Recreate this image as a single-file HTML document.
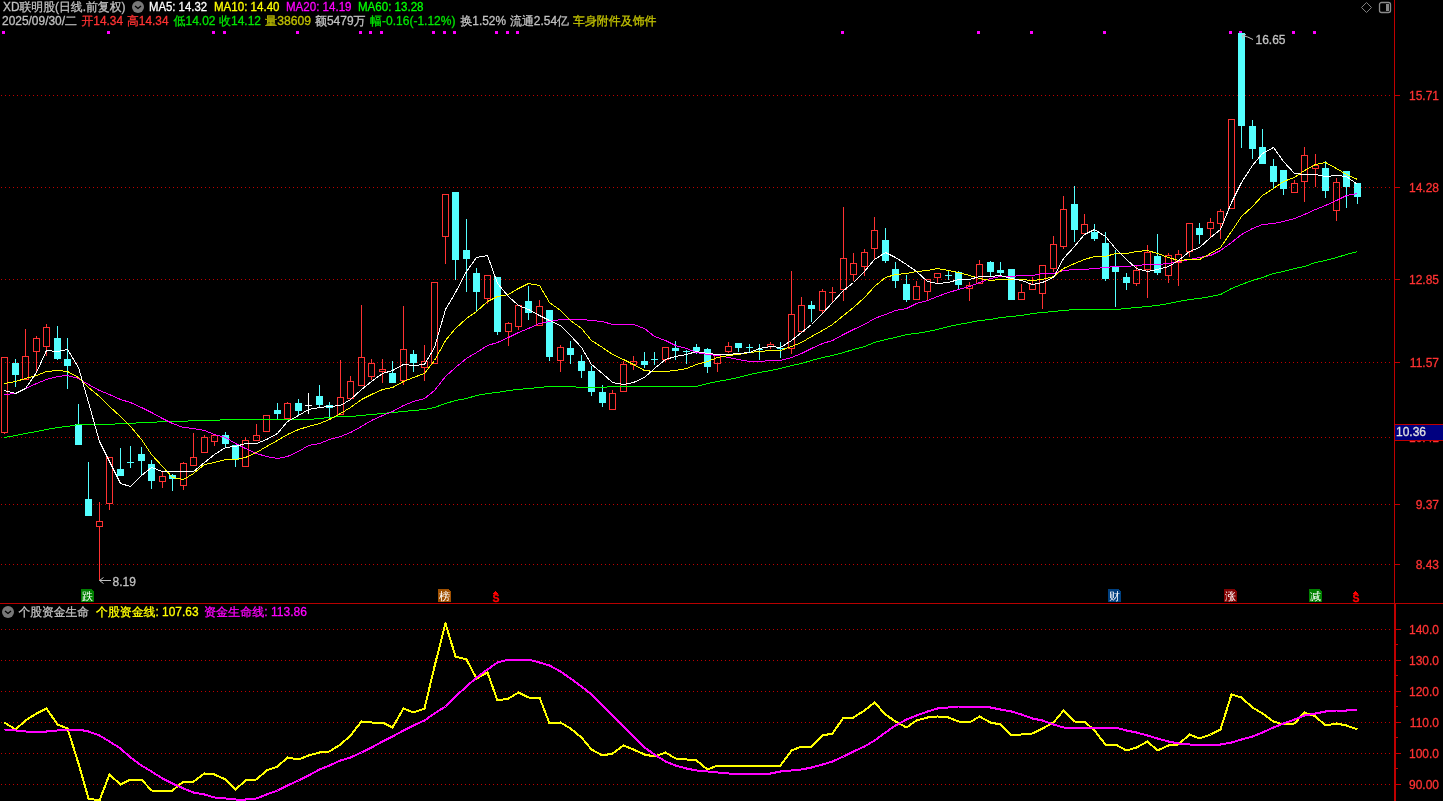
<!DOCTYPE html><html><head><meta charset="utf-8"><title>XD联明股 日线</title>
<style>html,body{margin:0;padding:0;background:#000;overflow:hidden}svg{display:block;will-change:transform}text{font-family:"Liberation Sans","WenQuanYi Zen Hei","Noto Sans CJK SC",sans-serif;font-size:12px;paint-order:stroke}text.t{font-size:11px}</style></head><body>
<svg width="1443" height="801" viewBox="0 0 1443 801" shape-rendering="crispEdges">
<rect width="1443" height="801" fill="#000"/>
<line x1="1" x2="1393" y1="95.5" y2="95.5" stroke="#c00000" stroke-width="1" stroke-dasharray="1 3"/>
<line x1="1" x2="1393" y1="187.5" y2="187.5" stroke="#c00000" stroke-width="1" stroke-dasharray="1 3"/>
<line x1="1" x2="1393" y1="279.5" y2="279.5" stroke="#c00000" stroke-width="1" stroke-dasharray="1 3"/>
<line x1="1" x2="1393" y1="362.5" y2="362.5" stroke="#c00000" stroke-width="1" stroke-dasharray="1 3"/>
<line x1="1" x2="1393" y1="437.5" y2="437.5" stroke="#c00000" stroke-width="1" stroke-dasharray="1 3"/>
<line x1="1" x2="1393" y1="504.5" y2="504.5" stroke="#c00000" stroke-width="1" stroke-dasharray="1 3"/>
<line x1="1" x2="1393" y1="564.5" y2="564.5" stroke="#c00000" stroke-width="1" stroke-dasharray="1 3"/>
<line x1="1" x2="1393" y1="629.5" y2="629.5" stroke="#c00000" stroke-width="1" stroke-dasharray="1 3"/>
<line x1="1" x2="1393" y1="660.5" y2="660.5" stroke="#c00000" stroke-width="1" stroke-dasharray="1 3"/>
<line x1="1" x2="1393" y1="691.5" y2="691.5" stroke="#c00000" stroke-width="1" stroke-dasharray="1 3"/>
<line x1="1" x2="1393" y1="722.5" y2="722.5" stroke="#c00000" stroke-width="1" stroke-dasharray="1 3"/>
<line x1="1" x2="1393" y1="753.5" y2="753.5" stroke="#c00000" stroke-width="1" stroke-dasharray="1 3"/>
<line x1="1" x2="1393" y1="784.5" y2="784.5" stroke="#c00000" stroke-width="1" stroke-dasharray="1 3"/>
<g fill="#ff00ff">
<rect x="2" y="31" width="3" height="3"/>
<rect x="107" y="31" width="3" height="3"/>
<rect x="212" y="31" width="3" height="3"/>
<rect x="223" y="31" width="3" height="3"/>
<rect x="296" y="31" width="3" height="3"/>
<rect x="359" y="31" width="3" height="3"/>
<rect x="369" y="31" width="3" height="3"/>
<rect x="380" y="31" width="3" height="3"/>
<rect x="432" y="31" width="3" height="3"/>
<rect x="443" y="31" width="3" height="3"/>
<rect x="453" y="31" width="3" height="3"/>
<rect x="495" y="31" width="3" height="3"/>
<rect x="506" y="31" width="3" height="3"/>
<rect x="516" y="31" width="3" height="3"/>
<rect x="841" y="31" width="3" height="3"/>
<rect x="977" y="31" width="3" height="3"/>
<rect x="1030" y="31" width="3" height="3"/>
<rect x="1103" y="31" width="3" height="3"/>
<rect x="1229" y="31" width="3" height="3"/>
<rect x="1239" y="31" width="3" height="3"/>
<rect x="1292" y="31" width="3" height="3"/>
<rect x="1313" y="31" width="3" height="3"/>
</g>
<g stroke="#ff3232" fill="none" stroke-width="1">
<rect x="1.5" y="357.5" width="6" height="75"/>
<line x1="4.5" x2="4.5" y1="433" y2="434"/>
</g>
<rect x="12" y="363" width="7" height="12" fill="#54ffff"/>
<line x1="15.5" x2="15.5" y1="359" y2="387" stroke="#54ffff"/>
<g stroke="#ff3232" fill="none" stroke-width="1">
<rect x="22.5" y="356.5" width="6" height="23"/>
<line x1="25.5" x2="25.5" y1="329" y2="356"/>
</g>
<g stroke="#ff3232" fill="none" stroke-width="1">
<rect x="33.5" y="338.5" width="6" height="13"/>
<line x1="36.5" x2="36.5" y1="336" y2="338"/>
<line x1="36.5" x2="36.5" y1="352" y2="372"/>
</g>
<g stroke="#ff3232" fill="none" stroke-width="1">
<rect x="43.5" y="327.5" width="6" height="19"/>
<line x1="46.5" x2="46.5" y1="324" y2="327"/>
<line x1="46.5" x2="46.5" y1="347" y2="356"/>
</g>
<rect x="54" y="338" width="7" height="21" fill="#54ffff"/>
<line x1="57.5" x2="57.5" y1="326" y2="360" stroke="#54ffff"/>
<rect x="64" y="359" width="7" height="7" fill="#54ffff"/>
<line x1="67.5" x2="67.5" y1="338" y2="389" stroke="#54ffff"/>
<rect x="75" y="424" width="7" height="21" fill="#54ffff"/>
<line x1="78.5" x2="78.5" y1="404" y2="445" stroke="#54ffff"/>
<rect x="85" y="499" width="7" height="17" fill="#54ffff"/>
<line x1="88.5" x2="88.5" y1="462" y2="516" stroke="#54ffff"/>
<g stroke="#ff3232" fill="none" stroke-width="1">
<rect x="96.5" y="521.5" width="6" height="5"/>
<line x1="99.5" x2="99.5" y1="502" y2="521"/>
<line x1="99.5" x2="99.5" y1="527" y2="580"/>
</g>
<g stroke="#ff3232" fill="none" stroke-width="1">
<rect x="106.5" y="457.5" width="6" height="46"/>
<line x1="109.5" x2="109.5" y1="504" y2="510"/>
</g>
<rect x="117" y="469" width="7" height="7" fill="#54ffff"/>
<line x1="120.5" x2="120.5" y1="448" y2="476" stroke="#54ffff"/>
<g stroke="#54ffff"><line x1="127" x2="134" y1="462.5" y2="462.5"/><line x1="130.5" x2="130.5" y1="446" y2="468"/></g>
<rect x="138" y="454" width="7" height="7" fill="#54ffff"/>
<line x1="141.5" x2="141.5" y1="447" y2="475" stroke="#54ffff"/>
<rect x="148" y="464" width="7" height="17" fill="#54ffff"/>
<line x1="151.5" x2="151.5" y1="460" y2="489" stroke="#54ffff"/>
<g stroke="#ff3232" fill="none" stroke-width="1">
<rect x="159.5" y="476.5" width="6" height="5"/>
<line x1="162.5" x2="162.5" y1="472" y2="476"/>
<line x1="162.5" x2="162.5" y1="482" y2="488"/>
</g>
<rect x="169" y="475" width="7" height="4" fill="#54ffff"/>
<line x1="172.5" x2="172.5" y1="474" y2="491" stroke="#54ffff"/>
<g stroke="#ff3232" fill="none" stroke-width="1">
<rect x="180.5" y="463.5" width="6" height="22"/>
<line x1="183.5" x2="183.5" y1="462" y2="463"/>
<line x1="183.5" x2="183.5" y1="486" y2="490"/>
</g>
<g stroke="#ff3232" fill="none" stroke-width="1">
<rect x="190.5" y="457.5" width="6" height="8"/>
<line x1="193.5" x2="193.5" y1="433" y2="457"/>
</g>
<g stroke="#ff3232" fill="none" stroke-width="1">
<rect x="201.5" y="437.5" width="6" height="15"/>
<line x1="204.5" x2="204.5" y1="435" y2="437"/>
</g>
<g stroke="#ff3232" fill="none" stroke-width="1">
<rect x="211.5" y="435.5" width="6" height="6"/>
<line x1="214.5" x2="214.5" y1="434" y2="435"/>
<line x1="214.5" x2="214.5" y1="442" y2="446"/>
</g>
<rect x="222" y="435" width="7" height="9" fill="#54ffff"/>
<line x1="225.5" x2="225.5" y1="432" y2="447" stroke="#54ffff"/>
<rect x="232" y="445" width="7" height="15" fill="#54ffff"/>
<line x1="235.5" x2="235.5" y1="445" y2="467" stroke="#54ffff"/>
<g stroke="#ff3232" fill="none" stroke-width="1">
<rect x="242.5" y="440.5" width="6" height="26"/>
<line x1="245.5" x2="245.5" y1="437" y2="440"/>
</g>
<g stroke="#ff3232" fill="none" stroke-width="1">
<rect x="253.5" y="435.5" width="6" height="5"/>
<line x1="256.5" x2="256.5" y1="424" y2="435"/>
</g>
<g stroke="#ff3232" fill="none" stroke-width="1">
<rect x="263.5" y="415.5" width="6" height="16"/>
</g>
<rect x="274" y="410" width="7" height="4" fill="#54ffff"/>
<line x1="277.5" x2="277.5" y1="403" y2="419" stroke="#54ffff"/>
<g stroke="#ff3232" fill="none" stroke-width="1">
<rect x="284.5" y="403.5" width="6" height="15"/>
<line x1="287.5" x2="287.5" y1="402" y2="403"/>
</g>
<rect x="295" y="403" width="7" height="8" fill="#54ffff"/>
<line x1="298.5" x2="298.5" y1="399" y2="415" stroke="#54ffff"/>
<g stroke="#ffffff"><line x1="305" x2="312" y1="405.5" y2="405.5"/><line x1="308.5" x2="308.5" y1="393" y2="414"/></g>
<rect x="316" y="396" width="7" height="9" fill="#54ffff"/>
<line x1="319.5" x2="319.5" y1="385" y2="407" stroke="#54ffff"/>
<rect x="326" y="405" width="7" height="3" fill="#54ffff"/>
<line x1="329.5" x2="329.5" y1="402" y2="419" stroke="#54ffff"/>
<g stroke="#ff3232" fill="none" stroke-width="1">
<rect x="337.5" y="397.5" width="6" height="17"/>
<line x1="340.5" x2="340.5" y1="360" y2="397"/>
</g>
<g stroke="#ff3232" fill="none" stroke-width="1">
<rect x="347.5" y="381.5" width="6" height="17"/>
<line x1="350.5" x2="350.5" y1="376" y2="381"/>
</g>
<g stroke="#ff3232" fill="none" stroke-width="1">
<rect x="358.5" y="357.5" width="6" height="28"/>
<line x1="361.5" x2="361.5" y1="305" y2="357"/>
</g>
<g stroke="#ff3232" fill="none" stroke-width="1">
<rect x="368.5" y="363.5" width="6" height="13"/>
<line x1="371.5" x2="371.5" y1="359" y2="363"/>
<line x1="371.5" x2="371.5" y1="377" y2="380"/>
</g>
<g stroke="#ff3232" fill="none" stroke-width="1">
<rect x="379.5" y="369.5" width="6" height="2"/>
<line x1="382.5" x2="382.5" y1="359" y2="369"/>
<line x1="382.5" x2="382.5" y1="372" y2="383"/>
</g>
<rect x="389" y="373" width="7" height="10" fill="#54ffff"/>
<line x1="392.5" x2="392.5" y1="361" y2="383" stroke="#54ffff"/>
<g stroke="#ff3232" fill="none" stroke-width="1">
<rect x="400.5" y="349.5" width="6" height="31"/>
<line x1="403.5" x2="403.5" y1="306" y2="349"/>
<line x1="403.5" x2="403.5" y1="381" y2="385"/>
</g>
<rect x="410" y="354" width="7" height="9" fill="#54ffff"/>
<line x1="413.5" x2="413.5" y1="350" y2="372" stroke="#54ffff"/>
<g stroke="#ff3232" fill="none" stroke-width="1">
<rect x="421.5" y="361.5" width="6" height="6"/>
<line x1="424.5" x2="424.5" y1="345" y2="361"/>
<line x1="424.5" x2="424.5" y1="368" y2="381"/>
</g>
<g stroke="#ff3232" fill="none" stroke-width="1">
<rect x="431.5" y="282.5" width="6" height="81"/>
</g>
<g stroke="#ff3232" fill="none" stroke-width="1">
<rect x="442.5" y="194.5" width="6" height="42"/>
<line x1="445.5" x2="445.5" y1="237" y2="264"/>
</g>
<rect x="452" y="192" width="7" height="68" fill="#54ffff"/>
<line x1="455.5" x2="455.5" y1="192" y2="280" stroke="#54ffff"/>
<rect x="463" y="250" width="7" height="9" fill="#54ffff"/>
<line x1="466.5" x2="466.5" y1="219" y2="292" stroke="#54ffff"/>
<rect x="473" y="273" width="7" height="19" fill="#54ffff"/>
<line x1="476.5" x2="476.5" y1="268" y2="311" stroke="#54ffff"/>
<g stroke="#ff3232" fill="none" stroke-width="1">
<rect x="484.5" y="275.5" width="6" height="23"/>
<line x1="487.5" x2="487.5" y1="299" y2="304"/>
</g>
<rect x="494" y="277" width="7" height="55" fill="#54ffff"/>
<line x1="497.5" x2="497.5" y1="277" y2="335" stroke="#54ffff"/>
<g stroke="#ff3232" fill="none" stroke-width="1">
<rect x="505.5" y="323.5" width="6" height="8"/>
<line x1="508.5" x2="508.5" y1="322" y2="323"/>
<line x1="508.5" x2="508.5" y1="332" y2="346"/>
</g>
<g stroke="#ff3232" fill="none" stroke-width="1">
<rect x="515.5" y="305.5" width="6" height="21"/>
<line x1="518.5" x2="518.5" y1="327" y2="330"/>
</g>
<rect x="525" y="301" width="7" height="12" fill="#54ffff"/>
<line x1="528.5" x2="528.5" y1="286" y2="320" stroke="#54ffff"/>
<g stroke="#ff3232" fill="none" stroke-width="1">
<rect x="536.5" y="306.5" width="6" height="19"/>
<line x1="539.5" x2="539.5" y1="300" y2="306"/>
</g>
<rect x="546" y="310" width="7" height="47" fill="#54ffff"/>
<line x1="549.5" x2="549.5" y1="310" y2="361" stroke="#54ffff"/>
<g stroke="#ff3232" fill="none" stroke-width="1">
<rect x="557.5" y="347.5" width="6" height="13"/>
<line x1="560.5" x2="560.5" y1="345" y2="347"/>
<line x1="560.5" x2="560.5" y1="361" y2="372"/>
</g>
<rect x="567" y="348" width="7" height="7" fill="#54ffff"/>
<line x1="570.5" x2="570.5" y1="341" y2="364" stroke="#54ffff"/>
<rect x="578" y="361" width="7" height="10" fill="#54ffff"/>
<line x1="581.5" x2="581.5" y1="355" y2="378" stroke="#54ffff"/>
<rect x="588" y="371" width="7" height="21" fill="#54ffff"/>
<line x1="591.5" x2="591.5" y1="366" y2="396" stroke="#54ffff"/>
<rect x="599" y="392" width="7" height="11" fill="#54ffff"/>
<line x1="602.5" x2="602.5" y1="385" y2="407" stroke="#54ffff"/>
<g stroke="#ff3232" fill="none" stroke-width="1">
<rect x="609.5" y="393.5" width="6" height="16"/>
<line x1="612.5" x2="612.5" y1="390" y2="393"/>
</g>
<g stroke="#ff3232" fill="none" stroke-width="1">
<rect x="620.5" y="364.5" width="6" height="27"/>
<line x1="623.5" x2="623.5" y1="361" y2="364"/>
</g>
<g stroke="#ff3232" fill="none" stroke-width="1">
<rect x="630.5" y="361.5" width="6" height="3"/>
<line x1="633.5" x2="633.5" y1="356" y2="361"/>
<line x1="633.5" x2="633.5" y1="365" y2="370"/>
</g>
<rect x="641" y="361" width="7" height="4" fill="#54ffff"/>
<line x1="644.5" x2="644.5" y1="352" y2="368" stroke="#54ffff"/>
<g stroke="#54ffff"><line x1="651" x2="658" y1="359.5" y2="359.5"/><line x1="654.5" x2="654.5" y1="352" y2="365"/></g>
<g stroke="#ff3232" fill="none" stroke-width="1">
<rect x="662.5" y="347.5" width="6" height="12"/>
<line x1="665.5" x2="665.5" y1="360" y2="362"/>
</g>
<rect x="672" y="348" width="7" height="3" fill="#54ffff"/>
<line x1="675.5" x2="675.5" y1="341" y2="360" stroke="#54ffff"/>
<g stroke="#54ffff"><line x1="683" x2="690" y1="351.5" y2="351.5"/><line x1="686.5" x2="686.5" y1="350" y2="364"/></g>
<rect x="693" y="347" width="7" height="4" fill="#54ffff"/>
<line x1="696.5" x2="696.5" y1="344" y2="354" stroke="#54ffff"/>
<rect x="704" y="349" width="7" height="18" fill="#54ffff"/>
<line x1="707.5" x2="707.5" y1="348" y2="373" stroke="#54ffff"/>
<g stroke="#ff3232" fill="none" stroke-width="1">
<rect x="714.5" y="355.5" width="6" height="8"/>
<line x1="717.5" x2="717.5" y1="364" y2="372"/>
</g>
<g stroke="#ff3232" fill="none" stroke-width="1">
<rect x="725.5" y="346.5" width="6" height="5"/>
<line x1="728.5" x2="728.5" y1="342" y2="346"/>
<line x1="728.5" x2="728.5" y1="352" y2="353"/>
</g>
<rect x="735" y="343" width="7" height="5" fill="#54ffff"/>
<line x1="738.5" x2="738.5" y1="343" y2="352" stroke="#54ffff"/>
<g stroke="#54ffff"><line x1="746" x2="753" y1="347.5" y2="347.5"/><line x1="749.5" x2="749.5" y1="344" y2="352"/></g>
<g stroke="#54ffff"><line x1="756" x2="763" y1="349.5" y2="349.5"/><line x1="759.5" x2="759.5" y1="344" y2="360"/></g>
<g stroke="#ff3232" fill="none" stroke-width="1">
<rect x="767.5" y="344.5" width="6" height="2"/>
<line x1="770.5" x2="770.5" y1="342" y2="344"/>
<line x1="770.5" x2="770.5" y1="347" y2="349"/>
</g>
<g stroke="#54ffff"><line x1="777" x2="784" y1="348.5" y2="348.5"/><line x1="780.5" x2="780.5" y1="342" y2="358"/></g>
<g stroke="#ff3232" fill="none" stroke-width="1">
<rect x="788.5" y="314.5" width="6" height="34"/>
<line x1="791.5" x2="791.5" y1="271" y2="314"/>
<line x1="791.5" x2="791.5" y1="349" y2="354"/>
</g>
<g stroke="#ff3232" fill="none" stroke-width="1">
<rect x="798.5" y="305.5" width="6" height="26"/>
<line x1="801.5" x2="801.5" y1="297" y2="305"/>
</g>
<rect x="808" y="305" width="7" height="4" fill="#54ffff"/>
<line x1="811.5" x2="811.5" y1="301" y2="322" stroke="#54ffff"/>
<g stroke="#ff3232" fill="none" stroke-width="1">
<rect x="819.5" y="291.5" width="6" height="19"/>
<line x1="822.5" x2="822.5" y1="289" y2="291"/>
<line x1="822.5" x2="822.5" y1="311" y2="314"/>
</g>
<g stroke="#ff3232"><line x1="829" x2="836" y1="292.5" y2="292.5"/><line x1="832.5" x2="832.5" y1="287" y2="302"/></g>
<g stroke="#ff3232" fill="none" stroke-width="1">
<rect x="840.5" y="258.5" width="6" height="31"/>
<line x1="843.5" x2="843.5" y1="207" y2="258"/>
<line x1="843.5" x2="843.5" y1="290" y2="301"/>
</g>
<g stroke="#ff3232" fill="none" stroke-width="1">
<rect x="850.5" y="263.5" width="6" height="11"/>
<line x1="853.5" x2="853.5" y1="253" y2="263"/>
<line x1="853.5" x2="853.5" y1="275" y2="281"/>
</g>
<g stroke="#ff3232" fill="none" stroke-width="1">
<rect x="861.5" y="252.5" width="6" height="14"/>
<line x1="864.5" x2="864.5" y1="249" y2="252"/>
<line x1="864.5" x2="864.5" y1="267" y2="276"/>
</g>
<g stroke="#ff3232" fill="none" stroke-width="1">
<rect x="871.5" y="230.5" width="6" height="18"/>
<line x1="874.5" x2="874.5" y1="217" y2="230"/>
<line x1="874.5" x2="874.5" y1="249" y2="259"/>
</g>
<rect x="882" y="240" width="7" height="21" fill="#54ffff"/>
<line x1="885.5" x2="885.5" y1="228" y2="263" stroke="#54ffff"/>
<rect x="892" y="269" width="7" height="12" fill="#54ffff"/>
<line x1="895.5" x2="895.5" y1="262" y2="288" stroke="#54ffff"/>
<rect x="903" y="284" width="7" height="16" fill="#54ffff"/>
<line x1="906.5" x2="906.5" y1="275" y2="302" stroke="#54ffff"/>
<g stroke="#ff3232" fill="none" stroke-width="1">
<rect x="913.5" y="286.5" width="6" height="13"/>
<line x1="916.5" x2="916.5" y1="281" y2="286"/>
</g>
<g stroke="#ff3232" fill="none" stroke-width="1">
<rect x="924.5" y="279.5" width="6" height="12"/>
<line x1="927.5" x2="927.5" y1="292" y2="300"/>
</g>
<g stroke="#ff3232" fill="none" stroke-width="1">
<rect x="934.5" y="273.5" width="6" height="4"/>
<line x1="937.5" x2="937.5" y1="278" y2="283"/>
</g>
<g stroke="#54ffff"><line x1="945" x2="952" y1="275.5" y2="275.5"/><line x1="948.5" x2="948.5" y1="271" y2="280"/></g>
<rect x="955" y="272" width="7" height="13" fill="#54ffff"/>
<line x1="958.5" x2="958.5" y1="271" y2="290" stroke="#54ffff"/>
<g stroke="#ff3232" fill="none" stroke-width="1">
<rect x="966.5" y="285.5" width="6" height="3"/>
<line x1="969.5" x2="969.5" y1="282" y2="285"/>
<line x1="969.5" x2="969.5" y1="289" y2="301"/>
</g>
<g stroke="#ff3232" fill="none" stroke-width="1">
<rect x="976.5" y="264.5" width="6" height="19"/>
<line x1="979.5" x2="979.5" y1="260" y2="264"/>
</g>
<rect x="987" y="262" width="7" height="10" fill="#54ffff"/>
<line x1="990.5" x2="990.5" y1="261" y2="276" stroke="#54ffff"/>
<rect x="997" y="270" width="7" height="3" fill="#54ffff"/>
<line x1="1000.5" x2="1000.5" y1="262" y2="276" stroke="#54ffff"/>
<rect x="1008" y="269" width="7" height="31" fill="#54ffff"/>
<line x1="1011.5" x2="1011.5" y1="269" y2="300" stroke="#54ffff"/>
<g stroke="#ff3232" fill="none" stroke-width="1">
<rect x="1018.5" y="292.5" width="6" height="7"/>
<line x1="1021.5" x2="1021.5" y1="284" y2="292"/>
</g>
<g stroke="#ff3232" fill="none" stroke-width="1">
<rect x="1029.5" y="284.5" width="6" height="5"/>
<line x1="1032.5" x2="1032.5" y1="277" y2="284"/>
</g>
<g stroke="#ff3232" fill="none" stroke-width="1">
<rect x="1039.5" y="265.5" width="6" height="28"/>
<line x1="1042.5" x2="1042.5" y1="294" y2="309"/>
</g>
<g stroke="#ff3232" fill="none" stroke-width="1">
<rect x="1050.5" y="244.5" width="6" height="24"/>
<line x1="1053.5" x2="1053.5" y1="236" y2="244"/>
<line x1="1053.5" x2="1053.5" y1="269" y2="272"/>
</g>
<g stroke="#ff3232" fill="none" stroke-width="1">
<rect x="1060.5" y="209.5" width="6" height="37"/>
<line x1="1063.5" x2="1063.5" y1="196" y2="209"/>
<line x1="1063.5" x2="1063.5" y1="247" y2="249"/>
</g>
<rect x="1071" y="204" width="7" height="26" fill="#54ffff"/>
<line x1="1074.5" x2="1074.5" y1="186" y2="242" stroke="#54ffff"/>
<g stroke="#ff3232" fill="none" stroke-width="1">
<rect x="1081.5" y="224.5" width="6" height="9"/>
<line x1="1084.5" x2="1084.5" y1="214" y2="224"/>
</g>
<rect x="1091" y="232" width="7" height="7" fill="#54ffff"/>
<line x1="1094.5" x2="1094.5" y1="224" y2="241" stroke="#54ffff"/>
<rect x="1102" y="243" width="7" height="36" fill="#54ffff"/>
<line x1="1105.5" x2="1105.5" y1="232" y2="281" stroke="#54ffff"/>
<rect x="1112" y="266" width="7" height="6" fill="#54ffff"/>
<line x1="1115.5" x2="1115.5" y1="250" y2="307" stroke="#54ffff"/>
<rect x="1123" y="277" width="7" height="6" fill="#54ffff"/>
<line x1="1126.5" x2="1126.5" y1="273" y2="290" stroke="#54ffff"/>
<g stroke="#ff3232" fill="none" stroke-width="1">
<rect x="1133.5" y="270.5" width="6" height="13"/>
<line x1="1136.5" x2="1136.5" y1="265" y2="270"/>
<line x1="1136.5" x2="1136.5" y1="284" y2="286"/>
</g>
<g stroke="#ff3232" fill="none" stroke-width="1">
<rect x="1144.5" y="252.5" width="6" height="17"/>
<line x1="1147.5" x2="1147.5" y1="245" y2="252"/>
<line x1="1147.5" x2="1147.5" y1="270" y2="298"/>
</g>
<rect x="1154" y="256" width="7" height="17" fill="#54ffff"/>
<line x1="1157.5" x2="1157.5" y1="234" y2="275" stroke="#54ffff"/>
<g stroke="#ff3232" fill="none" stroke-width="1">
<rect x="1165.5" y="255.5" width="6" height="20"/>
<line x1="1168.5" x2="1168.5" y1="253" y2="255"/>
<line x1="1168.5" x2="1168.5" y1="276" y2="283"/>
</g>
<g stroke="#ff3232" fill="none" stroke-width="1">
<rect x="1175.5" y="254.5" width="6" height="8"/>
<line x1="1178.5" x2="1178.5" y1="250" y2="254"/>
<line x1="1178.5" x2="1178.5" y1="263" y2="286"/>
</g>
<g stroke="#ff3232" fill="none" stroke-width="1">
<rect x="1186.5" y="223.5" width="6" height="28"/>
<line x1="1189.5" x2="1189.5" y1="252" y2="257"/>
</g>
<rect x="1196" y="228" width="7" height="7" fill="#54ffff"/>
<line x1="1199.5" x2="1199.5" y1="223" y2="244" stroke="#54ffff"/>
<g stroke="#ff3232" fill="none" stroke-width="1">
<rect x="1207.5" y="222.5" width="6" height="6"/>
<line x1="1210.5" x2="1210.5" y1="218" y2="222"/>
<line x1="1210.5" x2="1210.5" y1="229" y2="237"/>
</g>
<g stroke="#ff3232" fill="none" stroke-width="1">
<rect x="1217.5" y="211.5" width="6" height="12"/>
<line x1="1220.5" x2="1220.5" y1="209" y2="211"/>
<line x1="1220.5" x2="1220.5" y1="224" y2="239"/>
</g>
<g stroke="#ff3232" fill="none" stroke-width="1">
<rect x="1228.5" y="119.5" width="6" height="89"/>
</g>
<rect x="1238" y="33" width="7" height="93" fill="#54ffff"/>
<line x1="1241.5" x2="1241.5" y1="33" y2="148" stroke="#54ffff"/>
<rect x="1249" y="126" width="7" height="23" fill="#54ffff"/>
<line x1="1252.5" x2="1252.5" y1="120" y2="159" stroke="#54ffff"/>
<rect x="1259" y="147" width="7" height="17" fill="#54ffff"/>
<line x1="1262.5" x2="1262.5" y1="129" y2="164" stroke="#54ffff"/>
<rect x="1270" y="166" width="7" height="16" fill="#54ffff"/>
<line x1="1273.5" x2="1273.5" y1="159" y2="189" stroke="#54ffff"/>
<rect x="1280" y="170" width="7" height="19" fill="#54ffff"/>
<line x1="1283.5" x2="1283.5" y1="170" y2="195" stroke="#54ffff"/>
<g stroke="#ff3232" fill="none" stroke-width="1">
<rect x="1291.5" y="183.5" width="6" height="9"/>
<line x1="1294.5" x2="1294.5" y1="180" y2="183"/>
</g>
<g stroke="#ff3232" fill="none" stroke-width="1">
<rect x="1301.5" y="155.5" width="6" height="26"/>
<line x1="1304.5" x2="1304.5" y1="147" y2="155"/>
<line x1="1304.5" x2="1304.5" y1="182" y2="202"/>
</g>
<g stroke="#ff3232" fill="none" stroke-width="1">
<rect x="1312.5" y="165.5" width="6" height="3"/>
<line x1="1315.5" x2="1315.5" y1="154" y2="165"/>
<line x1="1315.5" x2="1315.5" y1="169" y2="187"/>
</g>
<rect x="1322" y="168" width="7" height="23" fill="#54ffff"/>
<line x1="1325.5" x2="1325.5" y1="161" y2="198" stroke="#54ffff"/>
<g stroke="#ff3232" fill="none" stroke-width="1">
<rect x="1333.5" y="182.5" width="6" height="28"/>
<line x1="1336.5" x2="1336.5" y1="178" y2="182"/>
<line x1="1336.5" x2="1336.5" y1="211" y2="221"/>
</g>
<rect x="1343" y="171" width="7" height="16" fill="#54ffff"/>
<line x1="1346.5" x2="1346.5" y1="171" y2="208" stroke="#54ffff"/>
<rect x="1354" y="183" width="7" height="14" fill="#54ffff"/>
<line x1="1357.5" x2="1357.5" y1="183" y2="204" stroke="#54ffff"/>
<polyline points="4.5,437.5 15.5,435.5 25.5,433.5 36.5,431.5 46.5,429.5 57.5,427.5 67.5,426.5 78.5,424.5 88.5,424.5 99.5,424.5 109.5,424.5 120.5,423.5 130.5,423.5 141.5,422.5 151.5,422.5 162.5,421.5 172.5,421.5 183.5,421.5 193.5,420.5 204.5,420.5 214.5,420.5 225.5,419.5 235.5,419.5 245.5,419.5 256.5,419.5 266.5,419.5 277.5,419.5 287.5,419.5 298.5,419.5 308.5,419.5 319.5,418.5 329.5,417.5 340.5,416.5 350.5,416.5 361.5,415.5 371.5,414.5 382.5,413.5 392.5,412.5 403.5,411.5 413.5,410.5 424.5,409.5 434.5,407.5 445.5,403.5 455.5,400.5 466.5,398.5 476.5,395.5 487.5,393.5 497.5,392.5 508.5,390.5 518.5,389.5 528.5,388.5 539.5,387.5 549.5,386.5 560.5,386.5 570.5,386.5 581.5,387.5 591.5,387.5 602.5,387.5 612.5,386.5 623.5,386.5 633.5,386.5 644.5,386.5 654.5,386.5 665.5,386.5 675.5,386.5 686.5,386.5 696.5,386.5 707.5,383.5 717.5,381.5 728.5,379.5 738.5,377.5 749.5,374.5 759.5,372.5 770.5,370.5 780.5,368.5 791.5,365.5 801.5,363.5 811.5,360.5 822.5,357.5 832.5,355.5 843.5,352.5 853.5,349.5 864.5,346.5 874.5,342.5 885.5,339.5 895.5,337.5 906.5,334.5 916.5,333.5 927.5,331.5 937.5,329.5 948.5,326.5 958.5,324.5 969.5,322.5 979.5,320.5 990.5,319.5 1000.5,317.5 1011.5,316.5 1021.5,315.5 1032.5,313.5 1042.5,312.5 1053.5,311.5 1063.5,310.5 1074.5,309.5 1084.5,309.5 1094.5,309.5 1105.5,309.5 1115.5,309.5 1126.5,308.5 1136.5,307.5 1147.5,306.5 1157.5,305.5 1168.5,303.5 1178.5,301.5 1189.5,299.5 1199.5,298.5 1210.5,296.5 1220.5,294.5 1231.5,288.5 1241.5,284.5 1252.5,280.5 1262.5,277.5 1273.5,273.5 1283.5,271.5 1294.5,268.5 1304.5,266.5 1315.5,262.5 1325.5,260.5 1336.5,257.5 1346.5,254.5 1357.5,251.5" fill="none" stroke="#00ff00" stroke-width="1"/>
<polyline points="4.5,394.5 15.5,393.5 25.5,388.5 36.5,383.5 46.5,379.5 57.5,376.5 67.5,375.5 78.5,378.5 88.5,384.5 99.5,390.5 109.5,394.5 120.5,399.5 130.5,402.5 141.5,407.5 151.5,412.5 162.5,418.5 172.5,423.5 183.5,427.5 193.5,428.5 204.5,430.5 214.5,434.5 225.5,437.5 235.5,443.5 245.5,448.5 256.5,453.5 266.5,456.5 277.5,458.5 287.5,456.5 298.5,451.5 308.5,445.5 319.5,443.5 329.5,439.5 340.5,436.5 350.5,432.5 361.5,426.5 371.5,420.5 382.5,415.5 392.5,411.5 403.5,405.5 413.5,401.5 424.5,398.5 434.5,390.5 445.5,376.5 455.5,367.5 466.5,358.5 476.5,352.5 487.5,345.5 497.5,342.5 508.5,337.5 518.5,332.5 528.5,328.5 539.5,323.5 549.5,321.5 560.5,319.5 570.5,319.5 581.5,319.5 591.5,320.5 602.5,321.5 612.5,324.5 623.5,324.5 633.5,324.5 644.5,328.5 654.5,336.5 665.5,340.5 675.5,345.5 686.5,348.5 696.5,352.5 707.5,354.5 717.5,355.5 728.5,357.5 738.5,359.5 749.5,361.5 759.5,361.5 770.5,360.5 780.5,360.5 791.5,357.5 801.5,353.5 811.5,348.5 822.5,343.5 832.5,340.5 843.5,334.5 853.5,329.5 864.5,324.5 874.5,318.5 885.5,314.5 895.5,310.5 906.5,308.5 916.5,303.5 927.5,300.5 937.5,296.5 948.5,292.5 958.5,289.5 969.5,286.5 979.5,282.5 990.5,278.5 1000.5,276.5 1011.5,276.5 1021.5,275.5 1032.5,275.5 1042.5,273.5 1053.5,273.5 1063.5,270.5 1074.5,269.5 1084.5,269.5 1094.5,268.5 1105.5,267.5 1115.5,266.5 1126.5,266.5 1136.5,265.5 1147.5,264.5 1157.5,264.5 1168.5,263.5 1178.5,261.5 1189.5,259.5 1199.5,257.5 1210.5,255.5 1220.5,250.5 1231.5,242.5 1241.5,234.5 1252.5,228.5 1262.5,224.5 1273.5,223.5 1283.5,221.5 1294.5,218.5 1304.5,214.5 1315.5,209.5 1325.5,205.5 1336.5,200.5 1346.5,195.5 1357.5,193.5" fill="none" stroke="#ff00ff" stroke-width="1"/>
<polyline points="4.5,383.5 15.5,381.5 25.5,378.5 36.5,375.5 46.5,371.5 57.5,370.5 67.5,371.5 78.5,377.5 88.5,387.5 99.5,396.5 109.5,406.5 120.5,416.5 130.5,426.5 141.5,439.5 151.5,454.5 162.5,466.5 172.5,477.5 183.5,479.5 193.5,473.5 204.5,464.5 214.5,462.5 225.5,459.5 235.5,459.5 245.5,457.5 256.5,452.5 266.5,446.5 277.5,440.5 287.5,434.5 298.5,429.5 308.5,426.5 319.5,423.5 329.5,419.5 340.5,413.5 350.5,407.5 361.5,399.5 371.5,394.5 382.5,389.5 392.5,387.5 403.5,381.5 413.5,377.5 424.5,373.5 434.5,360.5 445.5,340.5 455.5,328.5 466.5,318.5 476.5,311.5 487.5,301.5 497.5,296.5 508.5,294.5 518.5,288.5 528.5,283.5 539.5,285.5 549.5,302.5 560.5,310.5 570.5,320.5 581.5,328.5 591.5,340.5 602.5,347.5 612.5,354.5 623.5,359.5 633.5,364.5 644.5,370.5 654.5,371.5 665.5,371.5 675.5,370.5 686.5,368.5 696.5,364.5 707.5,361.5 717.5,357.5 728.5,355.5 738.5,354.5 749.5,352.5 759.5,351.5 770.5,350.5 780.5,350.5 791.5,346.5 801.5,342.5 811.5,336.5 822.5,330.5 832.5,324.5 843.5,315.5 853.5,307.5 864.5,297.5 874.5,286.5 885.5,277.5 895.5,274.5 906.5,273.5 916.5,271.5 927.5,270.5 937.5,268.5 948.5,270.5 958.5,272.5 969.5,275.5 979.5,278.5 990.5,280.5 1000.5,279.5 1011.5,279.5 1021.5,279.5 1032.5,280.5 1042.5,279.5 1053.5,276.5 1063.5,268.5 1074.5,263.5 1084.5,259.5 1094.5,256.5 1105.5,256.5 1115.5,253.5 1126.5,253.5 1136.5,251.5 1147.5,250.5 1157.5,253.5 1168.5,257.5 1178.5,260.5 1189.5,259.5 1199.5,259.5 1210.5,253.5 1220.5,247.5 1231.5,231.5 1241.5,216.5 1252.5,206.5 1262.5,195.5 1273.5,188.5 1283.5,181.5 1294.5,177.5 1304.5,170.5 1315.5,164.5 1325.5,162.5 1336.5,168.5 1346.5,174.5 1357.5,179.5" fill="none" stroke="#ffff00" stroke-width="1"/>
<polyline points="4.5,390.5 15.5,393.5 25.5,388.5 36.5,372.5 46.5,350.5 57.5,351.5 67.5,349.5 78.5,367.5 88.5,402.5 99.5,441.5 109.5,461.5 120.5,483.5 130.5,486.5 141.5,475.5 151.5,467.5 162.5,471.5 172.5,471.5 183.5,471.5 193.5,471.5 204.5,462.5 214.5,454.5 225.5,447.5 235.5,446.5 245.5,443.5 256.5,443.5 266.5,439.5 277.5,433.5 287.5,421.5 298.5,415.5 308.5,409.5 319.5,407.5 329.5,406.5 340.5,405.5 350.5,399.5 361.5,389.5 371.5,381.5 382.5,373.5 392.5,370.5 403.5,364.5 413.5,365.5 424.5,364.5 434.5,347.5 445.5,309.5 455.5,292.5 466.5,271.5 476.5,257.5 487.5,255.5 497.5,283.5 508.5,296.5 518.5,305.5 528.5,309.5 539.5,315.5 549.5,320.5 560.5,325.5 570.5,335.5 581.5,347.5 591.5,364.5 602.5,373.5 612.5,382.5 623.5,384.5 633.5,382.5 644.5,377.5 654.5,368.5 665.5,359.5 675.5,356.5 686.5,354.5 696.5,351.5 707.5,353.5 717.5,354.5 728.5,354.5 738.5,353.5 749.5,352.5 759.5,348.5 770.5,346.5 780.5,347.5 791.5,340.5 801.5,332.5 811.5,324.5 822.5,313.5 832.5,302.5 843.5,290.5 853.5,282.5 864.5,271.5 874.5,259.5 885.5,252.5 895.5,257.5 906.5,264.5 916.5,271.5 927.5,281.5 937.5,283.5 948.5,282.5 958.5,279.5 969.5,279.5 979.5,276.5 990.5,276.5 1000.5,275.5 1011.5,278.5 1021.5,280.5 1032.5,284.5 1042.5,282.5 1053.5,277.5 1063.5,258.5 1074.5,246.5 1084.5,234.5 1094.5,229.5 1105.5,236.5 1115.5,248.5 1126.5,259.5 1136.5,268.5 1147.5,271.5 1157.5,269.5 1168.5,266.5 1178.5,260.5 1189.5,251.5 1199.5,247.5 1210.5,237.5 1220.5,229.5 1231.5,202.5 1241.5,182.5 1252.5,165.5 1262.5,153.5 1273.5,147.5 1283.5,161.5 1294.5,173.5 1304.5,174.5 1315.5,174.5 1325.5,176.5 1336.5,175.5 1346.5,176.5 1357.5,184.5" fill="none" stroke="#ffffff" stroke-width="1"/>
<g stroke-linejoin="round">
<polyline points="4.5,722.5 15.5,729.5 25.5,720.5 36.5,713.5 46.5,708.5 57.5,724.5 67.5,728.5 78.5,763.5 88.5,798.5 99.5,800.5 109.5,774.5 120.5,784.5 130.5,779.5 141.5,779.5 151.5,790.5 162.5,790.5 172.5,790.5 183.5,781.5 193.5,781.5 204.5,773.5 214.5,774.5 225.5,779.5 235.5,789.5 245.5,780.5 256.5,779.5 266.5,770.5 277.5,766.5 287.5,757.5 298.5,759.5 308.5,755.5 319.5,752.5 329.5,751.5 340.5,744.5 350.5,735.5 361.5,721.5 371.5,722.5 382.5,722.5 392.5,727.5 403.5,708.5 413.5,712.5 424.5,708.5 434.5,666.5 445.5,623.5 455.5,656.5 466.5,659.5 476.5,678.5 487.5,672.5 497.5,700.5 508.5,698.5 518.5,692.5 528.5,697.5 539.5,697.5 549.5,723.5 560.5,722.5 570.5,728.5 581.5,737.5 591.5,749.5 602.5,755.5 612.5,753.5 623.5,745.5 633.5,749.5 644.5,754.5 654.5,756.5 665.5,752.5 675.5,758.5 686.5,759.5 696.5,760.5 707.5,769.5 717.5,765.5 728.5,765.5 738.5,765.5 749.5,765.5 759.5,765.5 770.5,765.5 780.5,765.5 791.5,750.5 801.5,746.5 811.5,746.5 822.5,735.5 832.5,733.5 843.5,717.5 853.5,717.5 864.5,710.5 874.5,702.5 885.5,714.5 895.5,721.5 906.5,727.5 916.5,720.5 927.5,717.5 937.5,716.5 948.5,717.5 958.5,721.5 969.5,722.5 979.5,716.5 990.5,722.5 1000.5,724.5 1011.5,735.5 1021.5,734.5 1032.5,733.5 1042.5,728.5 1053.5,722.5 1063.5,710.5 1074.5,721.5 1084.5,721.5 1094.5,730.5 1105.5,744.5 1115.5,744.5 1126.5,750.5 1136.5,747.5 1147.5,741.5 1157.5,750.5 1168.5,745.5 1178.5,744.5 1189.5,734.5 1199.5,738.5 1210.5,734.5 1220.5,729.5 1231.5,694.5 1241.5,697.5 1252.5,707.5 1262.5,713.5 1273.5,721.5 1283.5,724.5 1294.5,723.5 1304.5,712.5 1315.5,716.5 1325.5,725.5 1336.5,723.5 1346.5,725.5 1357.5,729.5" fill="none" stroke="#ffff00" stroke-width="2"/>
<polyline points="4.5,729.5 15.5,730.5 25.5,731.5 36.5,731.5 46.5,731.5 57.5,730.5 67.5,729.5 78.5,729.5 88.5,731.5 99.5,735.5 109.5,741.5 120.5,748.5 130.5,757.5 141.5,765.5 151.5,771.5 162.5,778.5 172.5,783.5 183.5,788.5 193.5,792.5 204.5,794.5 214.5,797.5 225.5,798.5 235.5,799.5 245.5,799.5 256.5,798.5 266.5,794.5 277.5,790.5 287.5,785.5 298.5,780.5 308.5,775.5 319.5,769.5 329.5,765.5 340.5,760.5 350.5,757.5 361.5,752.5 371.5,747.5 382.5,741.5 392.5,736.5 403.5,730.5 413.5,725.5 424.5,720.5 434.5,713.5 445.5,706.5 455.5,696.5 466.5,686.5 476.5,677.5 487.5,669.5 497.5,662.5 508.5,659.5 518.5,659.5 528.5,659.5 539.5,662.5 549.5,665.5 560.5,671.5 570.5,678.5 581.5,686.5 591.5,694.5 602.5,705.5 612.5,715.5 623.5,726.5 633.5,736.5 644.5,747.5 654.5,754.5 665.5,761.5 675.5,765.5 686.5,768.5 696.5,770.5 707.5,771.5 717.5,772.5 728.5,773.5 738.5,773.5 749.5,773.5 759.5,773.5 770.5,773.5 780.5,771.5 791.5,770.5 801.5,769.5 811.5,767.5 822.5,764.5 832.5,761.5 843.5,756.5 853.5,751.5 864.5,746.5 874.5,740.5 885.5,732.5 895.5,725.5 906.5,719.5 916.5,715.5 927.5,711.5 937.5,708.5 948.5,707.5 958.5,706.5 969.5,706.5 979.5,706.5 990.5,707.5 1000.5,709.5 1011.5,711.5 1021.5,714.5 1032.5,718.5 1042.5,720.5 1053.5,724.5 1063.5,727.5 1074.5,727.5 1084.5,727.5 1094.5,727.5 1105.5,727.5 1115.5,727.5 1126.5,730.5 1136.5,732.5 1147.5,735.5 1157.5,738.5 1168.5,741.5 1178.5,743.5 1189.5,744.5 1199.5,744.5 1210.5,744.5 1220.5,744.5 1231.5,742.5 1241.5,739.5 1252.5,736.5 1262.5,732.5 1273.5,727.5 1283.5,723.5 1294.5,719.5 1304.5,715.5 1315.5,713.5 1325.5,711.5 1336.5,710.5 1346.5,710.5 1357.5,709.5" fill="none" stroke="#ff00ff" stroke-width="2"/>
</g>
<rect x="0" y="603" width="1443" height="1" fill="#b80000"/>
<rect x="1394" y="0" width="1" height="603" fill="#c00000"/>
<rect x="1394" y="604" width="2" height="197" fill="#c00000"/>
<rect x="1395" y="95" width="5" height="1" fill="#c00000"/>
<text x="1439" y="100" text-anchor="end" fill="#ff3232" stroke="#ff3232" stroke-width="0.3">15.71</text>
<rect x="1395" y="187" width="5" height="1" fill="#c00000"/>
<text x="1439" y="192" text-anchor="end" fill="#ff3232" stroke="#ff3232" stroke-width="0.3">14.28</text>
<rect x="1395" y="279" width="5" height="1" fill="#c00000"/>
<text x="1439" y="284" text-anchor="end" fill="#ff3232" stroke="#ff3232" stroke-width="0.3">12.85</text>
<rect x="1395" y="362" width="5" height="1" fill="#c00000"/>
<text x="1439" y="367" text-anchor="end" fill="#ff3232" stroke="#ff3232" stroke-width="0.3">11.57</text>
<rect x="1395" y="437" width="5" height="1" fill="#c00000"/>
<text x="1439" y="442" text-anchor="end" fill="#ff3232" stroke="#ff3232" stroke-width="0.3">10.41</text>
<rect x="1395" y="504" width="5" height="1" fill="#c00000"/>
<text x="1439" y="509" text-anchor="end" fill="#ff3232" stroke="#ff3232" stroke-width="0.3">9.37</text>
<rect x="1395" y="564" width="5" height="1" fill="#c00000"/>
<text x="1439" y="569" text-anchor="end" fill="#ff3232" stroke="#ff3232" stroke-width="0.3">8.43</text>
<rect x="1396" y="629" width="5" height="1" fill="#c00000"/>
<rect x="1396" y="644" width="2" height="1" fill="#c00000"/>
<text x="1439" y="634" text-anchor="end" fill="#ff3232" stroke="#ff3232" stroke-width="0.3">140.0</text>
<rect x="1396" y="660" width="5" height="1" fill="#c00000"/>
<rect x="1396" y="675" width="2" height="1" fill="#c00000"/>
<text x="1439" y="665" text-anchor="end" fill="#ff3232" stroke="#ff3232" stroke-width="0.3">130.0</text>
<rect x="1396" y="691" width="5" height="1" fill="#c00000"/>
<rect x="1396" y="706" width="2" height="1" fill="#c00000"/>
<text x="1439" y="696" text-anchor="end" fill="#ff3232" stroke="#ff3232" stroke-width="0.3">120.0</text>
<rect x="1396" y="722" width="5" height="1" fill="#c00000"/>
<rect x="1396" y="737" width="2" height="1" fill="#c00000"/>
<text x="1439" y="727" text-anchor="end" fill="#ff3232" stroke="#ff3232" stroke-width="0.3">110.0</text>
<rect x="1396" y="753" width="5" height="1" fill="#c00000"/>
<rect x="1396" y="768" width="2" height="1" fill="#c00000"/>
<text x="1439" y="758" text-anchor="end" fill="#ff3232" stroke="#ff3232" stroke-width="0.3">100.0</text>
<rect x="1396" y="784" width="5" height="1" fill="#c00000"/>
<text x="1439" y="789" text-anchor="end" fill="#ff3232" stroke="#ff3232" stroke-width="0.3">90.00</text>
<rect x="1395" y="424" width="48" height="17" fill="#c00000"/><rect x="1395" y="425" width="48" height="15" fill="#000080"/>
<text x="1396" y="436" fill="#e0e0e0" stroke="#e0e0e0" stroke-width="0.3">10.36</text>
<path d="M81 589h10l3 3v10h-13z" fill="#008000"/>
<text class="t" x="82" y="599.5" fill="#fff">跌</text>
<path d="M438 589h10l3 3v10h-13z" fill="#a05000"/>
<text class="t" x="439" y="599.5" fill="#fff">榜</text>
<path d="M1108 589h10l3 3v10h-13z" fill="#004080"/>
<text class="t" x="1109" y="599.5" fill="#fff">财</text>
<path d="M1224 589h10l3 3v10h-13z" fill="#800000"/>
<text class="t" x="1225" y="599.5" fill="#fff">涨</text>
<path d="M1309 589h10l3 3v10h-13z" fill="#008000"/>
<text class="t" x="1310" y="599.5" fill="#fff">减</text>
<g fill="#ff0000"><rect x="495" y="591" width="1" height="1"/><rect x="494" y="592" width="3" height="1"/><rect x="493" y="593" width="5" height="1"/></g>
<text x="492.5" y="602" fill="#ff0000" stroke="#ff0000" stroke-width="0.3" font-weight="bold" style="font-size:10.5px">S</text>
<g fill="#ff0000"><rect x="1355" y="591" width="1" height="1"/><rect x="1354" y="592" width="3" height="1"/><rect x="1353" y="593" width="5" height="1"/></g>
<text x="1352.5" y="602" fill="#ff0000" stroke="#ff0000" stroke-width="0.3" font-weight="bold" style="font-size:10.5px">S</text>
<g stroke="#c0c0c0" fill="none" shape-rendering="auto"><path d="M99.5 580.5H111M99.5 580.5l4-3M99.5 580.5l4 3"/></g>
<text x="112.5" y="586" fill="#c0c0c0" stroke="#c0c0c0" stroke-width="0.3">8.19</text>
<g stroke="#c0c0c0" fill="none" shape-rendering="auto"><path d="M1242 35.5q6 1 11 4M1242 35.5l1.5 4M1242 35.5l4-1"/></g>
<text x="1255.5" y="44" fill="#c0c0c0" stroke="#c0c0c0" stroke-width="0.3">16.65</text>
<text x="3" y="11" fill="#c0c0c0" stroke="#c0c0c0" stroke-width="0.3" textLength="122.5" lengthAdjust="spacingAndGlyphs">XD联明股(日线.前复权)</text>
<text x="149" y="11" fill="#ffffff" stroke="#ffffff" stroke-width="0.3" textLength="58" lengthAdjust="spacingAndGlyphs">MA5: 14.32</text>
<text x="214" y="11" fill="#ffff00" stroke="#ffff00" stroke-width="0.3" textLength="65.5" lengthAdjust="spacingAndGlyphs">MA10: 14.40</text>
<text x="286" y="11" fill="#ff00ff" stroke="#ff00ff" stroke-width="0.3" textLength="65.5" lengthAdjust="spacingAndGlyphs">MA20: 14.19</text>
<text x="358" y="11" fill="#00ff00" stroke="#00ff00" stroke-width="0.3" textLength="65.5" lengthAdjust="spacingAndGlyphs">MA60: 13.28</text>
<text x="2" y="25" fill="#c0c0c0" stroke="#c0c0c0" stroke-width="0.3" textLength="75" lengthAdjust="spacingAndGlyphs">2025/09/30/二</text>
<text x="81.5" y="25" fill="#ff3232" stroke="#ff3232" stroke-width="0.3" textLength="41.5" lengthAdjust="spacingAndGlyphs">开14.34</text>
<text x="127" y="25" fill="#ff3232" stroke="#ff3232" stroke-width="0.3" textLength="41.5" lengthAdjust="spacingAndGlyphs">高14.34</text>
<text x="173.5" y="25" fill="#00e600" stroke="#00e600" stroke-width="0.3" textLength="42" lengthAdjust="spacingAndGlyphs">低14.02</text>
<text x="219" y="25" fill="#00e600" stroke="#00e600" stroke-width="0.3" textLength="42" lengthAdjust="spacingAndGlyphs">收14.12</text>
<text x="265" y="25" fill="#c0c000" stroke="#c0c000" stroke-width="0.3" textLength="46" lengthAdjust="spacingAndGlyphs">量38609</text>
<text x="315" y="25" fill="#c0c0c0" stroke="#c0c0c0" stroke-width="0.3" textLength="50.5" lengthAdjust="spacingAndGlyphs">额5479万</text>
<text x="370" y="25" fill="#00e600" stroke="#00e600" stroke-width="0.3" textLength="85.5" lengthAdjust="spacingAndGlyphs">幅-0.16(-1.12%)</text>
<text x="460.5" y="25" fill="#c0c0c0" stroke="#c0c0c0" stroke-width="0.3" textLength="45.5" lengthAdjust="spacingAndGlyphs">换1.52%</text>
<text x="510" y="25" fill="#c0c0c0" stroke="#c0c0c0" stroke-width="0.3" textLength="59" lengthAdjust="spacingAndGlyphs">流通2.54亿</text>
<text x="573" y="25" fill="#c0c000" stroke="#c0c000" stroke-width="0.3" textLength="83.5" lengthAdjust="spacingAndGlyphs">车身附件及饰件</text>
<text x="18.5" y="616" fill="#c0c0c0" stroke="#c0c0c0" stroke-width="0.3" textLength="70.5" lengthAdjust="spacingAndGlyphs">个股资金生命</text>
<text x="96" y="616" fill="#ffff00" stroke="#ffff00" stroke-width="0.3" textLength="102.5" lengthAdjust="spacingAndGlyphs">个股资金线: 107.63</text>
<text x="204" y="616" fill="#ff00ff" stroke="#ff00ff" stroke-width="0.3" textLength="103" lengthAdjust="spacingAndGlyphs">资金生命线: 113.86</text>
<g shape-rendering="auto"><circle cx="138" cy="7" r="6" fill="#787878"/><path d="M135 6l3 2.5l3-2.5" stroke="#000" stroke-width="1.3" fill="none"/></g>
<g shape-rendering="auto"><circle cx="8" cy="612" r="6" fill="#787878"/><path d="M5 611l3 2.5l3-2.5" stroke="#000" stroke-width="1.3" fill="none"/></g>
<g shape-rendering="auto" stroke="#808080" fill="none"><path d="M1366.5 2.5l5 5l-5 5l-5-5z"/><rect x="1379.5" y="2.5" width="11" height="10" rx="2" stroke="#8a8a8a" stroke-width="1.3"/><rect x="1386" y="4" width="3" height="7" fill="#888" stroke="none"/></g>
</svg></body></html>
